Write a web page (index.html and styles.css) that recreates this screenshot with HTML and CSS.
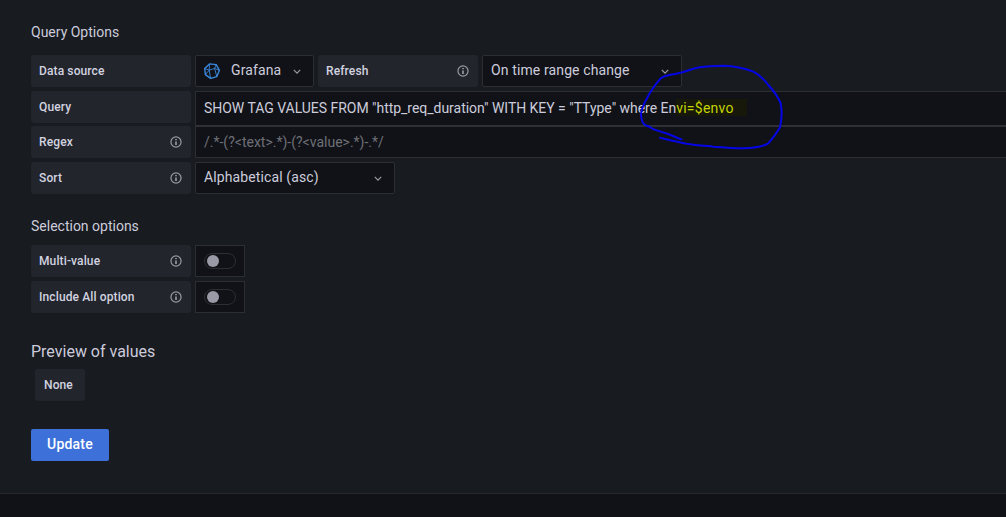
FILE: index.html
```html
<!DOCTYPE html>
<html lang="en">
<head>
<meta charset="utf-8">
<title>Query Options</title>
<link rel="stylesheet" href="styles.css">
</head>
<body>
<main class="page">
  <h5 class="heading first">Query Options</h5>
  <div class="row">
    <div class="label">Data source</div>
    <div class="select ds">
      <svg class="logo" viewBox="0 0 16 16" width="16" height="16" fill="none" stroke="#3a88dc" stroke-width="1.4" stroke-linejoin="round"><path d="M5.5 .9 12.2 1.6 15.4 7.4 12.8 13.6 6.6 15.4 1.4 11.6 .7 5.4Z"/><path d="M5.5 .9 5.2 7.2 1.4 11.6M5.2 7.2 .7 5.4M5.2 7.2 10.6 5.4 12.2 1.6M10.6 5.4 15.4 7.4M10.6 5.4 12.8 13.6M5.2 7.2 6.6 15.4" stroke-width=".9"/></svg>
      <span class="ds-name">Grafana</span>
      <svg class="chev" viewBox="0 0 10 6" width="8" height="5"><path d="M1 1l4 4 4-4" fill="none" stroke="#9a9ba5" stroke-width="1.5"/></svg>
    </div>
    <div class="label">Refresh
      <svg class="info" viewBox="0 0 14 14" width="12" height="12"><circle cx="7" cy="7" r="5.9" fill="none" stroke="#9a9ba5" stroke-width="1.4"/><path d="M7 3.4v1.6M7 6.3v4.2" stroke="#9a9ba5" stroke-width="1.9"/></svg>
    </div>
    <div class="select refresh">
      <span>On time range change</span>
      <svg class="chev" viewBox="0 0 10 6" width="8" height="5"><path d="M1 1l4 4 4-4" fill="none" stroke="#9a9ba5" stroke-width="1.5"/></svg>
    </div>
  </div>
  <div class="row query">
    <div class="label">Query</div>
    <div class="field code">SHOW TAG VALUES FROM "http_req_duration" WITH KEY = "TType" where En<span class="hl">vi=$envo</span></div>
  </div>
  <div class="row regex">
    <div class="label">Regex
      <svg class="info" viewBox="0 0 14 14" width="12" height="12"><circle cx="7" cy="7" r="5.9" fill="none" stroke="#9a9ba5" stroke-width="1.4"/><path d="M7 3.4v1.6M7 6.3v4.2" stroke="#9a9ba5" stroke-width="1.9"/></svg>
    </div>
    <div class="field placeholder">/.*-(?&lt;text&gt;.*)-(?&lt;value&gt;.*)-.*/</div>
  </div>
  <div class="row">
    <div class="label">Sort
      <svg class="info" viewBox="0 0 14 14" width="12" height="12"><circle cx="7" cy="7" r="5.9" fill="none" stroke="#9a9ba5" stroke-width="1.4"/><path d="M7 3.4v1.6M7 6.3v4.2" stroke="#9a9ba5" stroke-width="1.9"/></svg>
    </div>
    <div class="select sort">
      <span>Alphabetical (asc)</span>
      <svg class="chev" viewBox="0 0 10 6" width="8" height="5"><path d="M1 1l4 4 4-4" fill="none" stroke="#9a9ba5" stroke-width="1.5"/></svg>
    </div>
  </div>

  <h5 class="heading second">Selection options</h5>
  <div class="row">
    <div class="label">Multi-value
      <svg class="info" viewBox="0 0 14 14" width="12" height="12"><circle cx="7" cy="7" r="5.9" fill="none" stroke="#9a9ba5" stroke-width="1.4"/><path d="M7 3.4v1.6M7 6.3v4.2" stroke="#9a9ba5" stroke-width="1.9"/></svg>
    </div>
    <div class="switch-box"><span class="track"><span class="knob"></span></span></div>
  </div>
  <div class="row">
    <div class="label">Include All option
      <svg class="info" viewBox="0 0 14 14" width="12" height="12"><circle cx="7" cy="7" r="5.9" fill="none" stroke="#9a9ba5" stroke-width="1.4"/><path d="M7 3.4v1.6M7 6.3v4.2" stroke="#9a9ba5" stroke-width="1.9"/></svg>
    </div>
    <div class="switch-box"><span class="track"><span class="knob"></span></span></div>
  </div>

  <h5 class="heading preview">Preview of values</h5>
  <div class="chip">None</div>
  <button class="update" type="button">Update</button>
</main>
<footer class="foot"></footer>
<svg class="scribble" viewBox="0 0 1158 330" width="386" height="110"><path d="M185 268C165 262 150 252 128 247C112 241 100 240 88 230C72 226 66 222 63 195C63 178 70 165 78 150C88 130 100 110 122 85C135 76 150 74 165 72C190 68 210 58 240 52C265 47 285 47 310 47C345 48 375 55 400 65C420 75 432 88 445 105C460 122 474 138 482 160C487 185 486 205 480 232C470 250 458 265 445 280C430 290 405 294 370 295C340 296 310 292 280 290C250 287 225 285 200 281C175 276 150 270 120 263" fill="none" stroke="#0505e6" stroke-width="6" stroke-linecap="round" stroke-linejoin="round"/></svg>
</body>
</html>
```
FILE: styles.css
```css
* { box-sizing: border-box; }
html, body { margin: 0; height: 100%; }
body {
  background: #181b20;
  color: #ccccdc;
  font-family: Roboto, "Liberation Sans", sans-serif;
  font-size: 14px;
  overflow: hidden;
  position: relative;
  display: flex;
  flex-direction: column;
}
.page {
  flex: 1;
  padding: 23px 0 0 31px;
  display: flex;
  flex-direction: column;
  align-items: stretch;
}
.heading {
  margin: 0;
  font-weight: 400;
  font-size: 14px;
  line-height: 18px;
  color: #ccccdc;
}
.heading.first { margin-bottom: 14px; }
.heading.second { margin-top: 19px; margin-bottom: 10px; }
.heading.preview { font-size: 16px; line-height: 20px; margin-top: 25px; margin-bottom: 7px; }
.row {
  display: flex;
  gap: 4px;
  margin-bottom: 4px;
}
.row.query { margin-bottom: -1px; height: 36px; }
.label {
  width: 160px;
  height: 32px;
  flex: none;
  background: #22252b;
  border-radius: 3px;
  padding: 0 9px 0 8px;
  display: flex;
  align-items: center;
  justify-content: space-between;
  font-size: 12px;
  font-weight: 500;
  letter-spacing: .12px;
  color: #d2d3e0;
}
.info { flex: none; }
.select {
  height: 32px;
  background: #111217;
  border: 1px solid #2c2e33;
  border-radius: 2px;
  padding: 0 8px;
  display: flex;
  align-items: center;
  justify-content: space-between;
  flex: none;
  line-height: 28px;
}
.select span { position: relative; top: -1px; letter-spacing: .12px; }
.ds { width: 119px; }
.logo { flex: none; margin-right: 11px; }
.ds-name { margin-right: auto; }
.refresh { width: 200px; }
.sort { width: 200px; }
.chev { flex: none; margin-right: 4px; }
.field {
  flex: 1;
  background: #111217;
  border: 1px solid #2c2e33;
  border-right: 0;
  padding: 0 8px;
  display: flex;
  align-items: center;
  white-space: pre;
}
.code { height: 36px; border-bottom: 2px solid #2f3136; padding-bottom: 1px; letter-spacing: -.03px; }
.placeholder { height: 31px; margin-top: 1px; color: #6e7078; border-top: 0; padding-bottom: 1px; }
.hl {
  color: #c4d400;
  background: linear-gradient(#17180a, #17180a) 0 1px / 100% 17px no-repeat;
  padding: 0 13px 0 0;
  letter-spacing: .25px;
  line-height: 20px;
}
.switch-box {
  width: 50px;
  height: 32px;
  background: #111217;
  border: 1px solid #2c2e33;
  display: flex;
  align-items: center;
  justify-content: center;
}
.track {
  width: 32px;
  height: 16px;
  border: 1px solid #2c2e33;
  border-radius: 8px;
  display: flex;
  align-items: center;
  padding-left: 2px;
}
.knob {
  width: 12px;
  height: 12px;
  border-radius: 50%;
  background: #9a9aa6;
}
.chip {
  align-self: flex-start;
  margin-left: 4px;
  width: 50px;
  height: 32px;
  background: #22252b;
  border-radius: 3px;
  padding-left: 9px;
  display: flex;
  align-items: center;
  font-size: 12px;
  font-weight: 500;
  letter-spacing: .12px;
  color: #d2d3e0;
}
.update {
  align-self: flex-start;
  margin-top: 28px;
  width: 78px;
  height: 32px;
  padding: 0 0 2px;
  background: #3d71d9;
  color: #fff;
  border: 0;
  border-radius: 2px;
  font-family: inherit;
  font-size: 14px;
  font-weight: 500;
  letter-spacing: .2px;
}
.foot {
  flex: none;
  height: 24px;
  background: #111217;
  border-top: 1px solid #26282d;
}
.scribble {
  position: absolute;
  left: 620px;
  top: 50px;
  pointer-events: none;
}
```
